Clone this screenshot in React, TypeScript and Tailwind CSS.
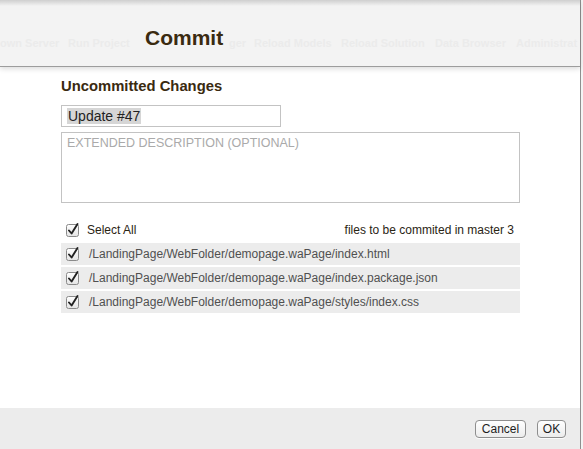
import React from 'react';

const files = [
    '/LandingPage/WebFolder/demopage.waPage/index.html',
    '/LandingPage/WebFolder/demopage.waPage/index.package.json',
    '/LandingPage/WebFolder/demopage.waPage/styles/index.css',
];

const toolbar = [
    { label: 'own Server', left: 'left-0' },
    { label: 'Run Project', left: 'left-[68px]' },
    { label: 'ger', left: 'left-[229px]' },
    { label: 'Reload Models', left: 'left-[254px]' },
    { label: 'Reload Solution', left: 'left-[341px]' },
    { label: 'Data Browser', left: 'left-[435px]' },
    { label: 'Administrat', left: 'left-[516px]' },
];

const CheckBox: React.FC = () => (
    <svg width="14" height="14" viewBox="0 0 14 14" className="shrink-0">
        <defs>
            <linearGradient id="cbg" x1="0" y1="0" x2="0" y2="1">
                <stop offset="0" stopColor="#ffffff" />
                <stop offset="1" stopColor="#e4e4e4" />
            </linearGradient>
        </defs>
        <rect x="0.5" y="1.5" width="12" height="12" rx="2" fill="url(#cbg)" stroke="#8a8a8a" />
        <path d="M3 7.5 L5.6 10.5 L11.5 1" fill="none" stroke="#222" strokeWidth="1.9" strokeLinecap="round" strokeLinejoin="round" />
    </svg>
);

const Button: React.FC<{ label: string; className?: string }> = ({ label, className }) => (
    <button className={`h-[18px] rounded-[4px] border border-[#8e8e8e] bg-gradient-to-b from-white to-[#ececec] text-[12px] leading-none text-[#1e1e1e] shadow-[0_1px_0_rgba(255,255,255,0.8)] ${className ?? ''}`}>
        {label}
    </button>
);

export default function App() {
    return (
        <div className="w-[583px] h-[449px] flex bg-[#f4f4f4] font-['Liberation_Sans',Arial,sans-serif] overflow-hidden">
            <div className="w-[581px] h-full flex flex-col bg-white border-r border-[#8f8f8f]">
                {/* sheet header over the toolbar */}
                <div className="relative h-[67px] shrink-0 bg-[#f3f3f3] border-b border-[#9c9c9c] shadow-[0_2px_5px_rgba(0,0,0,0.14)] z-10">
                    <div className="absolute inset-x-0 top-0 h-[6px] bg-gradient-to-b from-[#cfcfcf] to-[#f3f3f3]" />
                    {toolbar.map((t) => (
                        <span key={t.label} className={`absolute top-[35px] ${t.left} text-[11px] font-bold text-[#ebebeb] whitespace-nowrap`}>
                            {t.label}
                        </span>
                    ))}
                    <div className="relative pl-[145px] pt-[26px]">
                        <h1 className="text-[21px] font-bold leading-[24px] text-[#3a2a10]">Commit</h1>
                    </div>
                </div>

                {/* body */}
                <div className="flex-1 flex flex-col px-[61px] pt-[11px]">
                    <h2 className="text-[14.8px] font-bold leading-[17px] text-[#3a2a10]">Uncommitted Changes</h2>
                    <div className="mt-[10px] w-[220px] h-[22px] border border-[#c3c3c3] flex items-center pl-[5px]">
                        <span className="bg-[#d6d6d6] text-[14px] leading-[16px] text-[#222] px-[1px]">Update #47</span>
                    </div>
                    <div className="mt-[5px] w-[459px] h-[71px] border border-[#c3c3c3] px-[5px] pt-[3px]">
                        <p className="text-[12.5px] leading-[15px] text-[#aaaaaa]">EXTENDED DESCRIPTION (OPTIONAL)</p>
                    </div>

                    <div className="mt-[19px] w-[459px] flex items-center h-[16px] pl-[5px] pr-[6px]">
                        <CheckBox />
                        <span className="ml-[7px] text-[12px] text-[#2a2414]">Select All</span>
                        <span className="ml-auto text-[12px] text-[#2a2414]">files to be commited in master 3</span>
                    </div>

                    <div className="mt-[5px] w-[459px] flex flex-col gap-[2px]">
                        {files.map((f) => (
                            <div key={f} className="h-[22px] bg-[#ececec] flex items-center pl-[5px]">
                                <CheckBox />
                                <span className="ml-[9px] text-[12px] text-[#505050] whitespace-nowrap">{f}</span>
                            </div>
                        ))}
                    </div>
                </div>

                {/* footer */}
                <div className="h-[41px] shrink-0 bg-[#ececec] flex items-start justify-end gap-[11px] pt-[12px] pr-[14px]">
                    <Button label="Cancel" className="w-[51px]" />
                    <Button label="OK" className="w-[29px]" />
                </div>
            </div>
        </div>
    );
}
